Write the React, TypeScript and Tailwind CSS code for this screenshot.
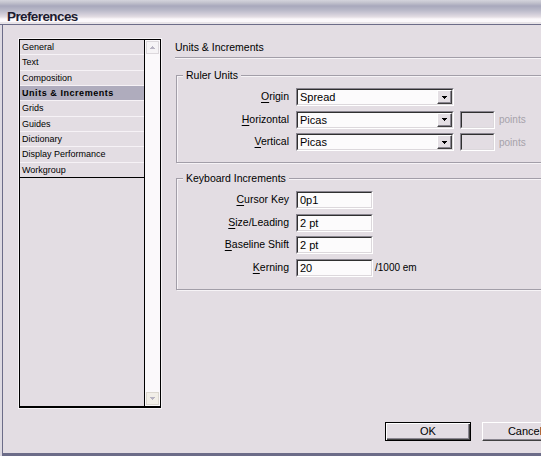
import React from 'react';

const SECTIONS = [
  'General',
  'Text',
  'Composition',
  'Units & Increments',
  'Grids',
  'Guides',
  'Dictionary',
  'Display Performance',
  'Workgroup',
];

function Arrow({ up = false, color = '#000' }: { up?: boolean; color?: string }) {
  return (
    <svg width="5" height="3" viewBox="0 0 5 3" shapeRendering="crispEdges" className={up ? 'rotate-180' : ''}>
      <rect x="0" y="0" width="5" height="1" fill={color} />
      <rect x="1" y="1" width="3" height="1" fill={color} />
      <rect x="2" y="2" width="1" height="1" fill={color} />
    </svg>
  );
}

function Sunken({ className = '', children }: { className?: string; children?: React.ReactNode }) {
  return (
    <div className={`flex h-[18px] border border-t-[#8a8690] border-l-[#8a8690] border-b-white border-r-white ${className}`}>
      <div className="flex flex-1 items-center border border-t-[#303030] border-l-[#303030] border-b-[#dcd8dc] border-r-[#dcd8dc]">
        {children}
      </div>
    </div>
  );
}

function Select({ value }: { value: string }) {
  return (
    <Sunken className="w-[158px] bg-[#fcfbfc]">
      <span className="flex-1 pl-[2px] text-[11px] leading-[14px]">{value}</span>
      <span className="flex h-full w-[15px] items-center justify-center border border-t-white border-l-white border-b-[#404040] border-r-[#404040] bg-[#e4dfe4] shadow-[inset_-1px_-1px_0_#8a8690]">
        <Arrow />
      </span>
    </Sunken>
  );
}

function Field({ value }: { value: string }) {
  return (
    <Sunken className="w-[77px] bg-[#fcfbfc]">
      <span className="pl-[2px] text-[11px] leading-[14px]">{value}</span>
    </Sunken>
  );
}

function Label({ text, k }: { text: string; k: number }) {
  return (
    <span className="w-[112px] text-right text-[10.5px]">
      {text.slice(0, k)}
      <span className="underline underline-offset-[2px]">{text[k]}</span>
      {text.slice(k + 1)}
    </span>
  );
}

function Group({ title, children }: { title: string; children: React.ReactNode }) {
  return (
    <div className="relative ml-[1px] border border-[#a29ea8] shadow-[inset_1px_1px_0_#f6f3f6,1px_1px_0_#f6f3f6] pt-[12px]">
      <span className="absolute -top-[7px] left-[6px] bg-[#e3dde3] px-[3px] text-[10.5px] leading-[12px]">{title}</span>
      {children}
    </div>
  );
}

export default function App() {
  return (
    <div className="h-[456px] w-[541px] overflow-hidden bg-[#dedae2] font-['Liberation_Sans',Arial,sans-serif] text-black">
      <div className="flex h-[456px] w-[587px] flex-col">
        {/* title bar */}
        <div className="h-[25px] shrink-0 border-b border-[#6c6c88] bg-[linear-gradient(to_bottom,#d4d4dc_0px,#c0c0cc_3px,#a8a8bc_6px,#b8b8c8_10px,#d0ccd8_14px,#e4dee4_17px,#fbf8fb_19px,#fbf8fb_22px,#e8e4e8_22px)] pl-[7px] pt-[4px]">
          <span className="text-[13.5px] font-bold leading-[15px] tracking-[-0.6px] text-[#1c1c30]">Preferences</span>
        </div>

        <div className="ml-[2px] flex flex-1 flex-col border-b-[3px] border-l border-r border-[#6c6c88] bg-[#e3dde3]">
          <div className="flex pl-[15px] pr-[18px] pt-[13px]">
            {/* section list */}
            <div className="h-[371px] w-[144px] shrink-0 border border-[#f6f3f6]">
              <div className="flex h-full border border-b-2 border-black">
                <div className="w-[125px] border-r border-black">
                  {SECTIONS.map((s, i) => (
                    <div
                      key={s}
                      className={`h-[15.33px] border-b pl-[2px] pt-[1px] text-[9px] leading-[13.33px] ${
                        i === SECTIONS.length - 1 ? 'border-black' : 'border-[#f6f2f6]'
                      } ${i === 3 ? 'bg-[#afacbd] font-bold tracking-[0.55px]' : ''}`}
                    >
                      {s}
                    </div>
                  ))}
                </div>
                <div className="flex flex-1 flex-col justify-between bg-[#fbf9fb] p-[1px]">
                  <div className="flex h-[13px] w-[13px] items-center justify-center border border-[#dcd8dc] bg-[#f6f4f6]">
                    <Arrow up color="#b8b4c2" />
                  </div>
                  <div className="flex h-[13px] w-[13px] items-center justify-center border border-[#dcd8d0] bg-[#f2efe8]">
                    <Arrow color="#b8b4c2" />
                  </div>
                </div>
              </div>
            </div>

            {/* settings panel */}
            <div className="ml-[13px] flex flex-1 flex-col">
              <div className="h-[20px] border-b border-[#a29ea8] pt-[3px] text-[10.5px] leading-[12px] shadow-[0_1px_0_#f6f3f6]">
                Units &amp; Increments
              </div>

              <div className="mt-[17px]">
                <Group title="Ruler Units">
                  <div className="flex flex-col gap-[4.5px] pb-[11px]">
                    <div className="flex items-center gap-[7px]">
                      <Label text="Origin" k={0} />
                      <Select value="Spread" />
                    </div>
                    <div className="flex items-center gap-[7px]">
                      <Label text="Horizontal" k={0} />
                      <Select value="Picas" />
                      <Sunken className="ml-[-1px] w-[35px]" />
                      <span className="ml-[-3px] text-[10px] text-[#a6a2aa]">points</span>
                    </div>
                    <div className="flex items-center gap-[7px]">
                      <Label text="Vertical" k={0} />
                      <Select value="Picas" />
                      <Sunken className="ml-[-1px] w-[35px]" />
                      <span className="ml-[-3px] text-[10px] text-[#a6a2aa]">points</span>
                    </div>
                  </div>
                </Group>
              </div>

              <div className="mt-[15px]">
                <Group title="Keyboard Increments">
                  <div className="flex flex-col gap-[4.6px] pb-[12px]">
                    <div className="flex items-center gap-[7px]">
                      <Label text="Cursor Key" k={0} />
                      <Field value="0p1" />
                    </div>
                    <div className="flex items-center gap-[7px]">
                      <Label text="Size/Leading" k={0} />
                      <Field value="2 pt" />
                    </div>
                    <div className="flex items-center gap-[7px]">
                      <Label text="Baseline Shift" k={0} />
                      <Field value="2 pt" />
                    </div>
                    <div className="flex items-center gap-[7px]">
                      <Label text="Kerning" k={0} />
                      <Field value="20" />
                      <span className="-ml-[5px] text-[10px]">/1000 em</span>
                    </div>
                  </div>
                </Group>
              </div>
            </div>
          </div>

          {/* buttons */}
          <div className="mt-[13px] flex justify-end gap-[11px] pr-[18px]">
            <button className="h-[19px] w-[86px] border border-black bg-[#e3dde3] text-[11px] shadow-[inset_1px_1px_0_#fff,inset_-1px_-1px_0_#404040,inset_-2px_-2px_0_#8a8690]">
              OK
            </button>
            <button className="h-[19px] w-[86px] border border-t-white border-l-white border-b-[#404040] border-r-[#404040] bg-[#e3dde3] text-[11px] shadow-[inset_-1px_-1px_0_#8a8690]">
              Cancel
            </button>
          </div>
        </div>
      </div>
    </div>
  );
}
